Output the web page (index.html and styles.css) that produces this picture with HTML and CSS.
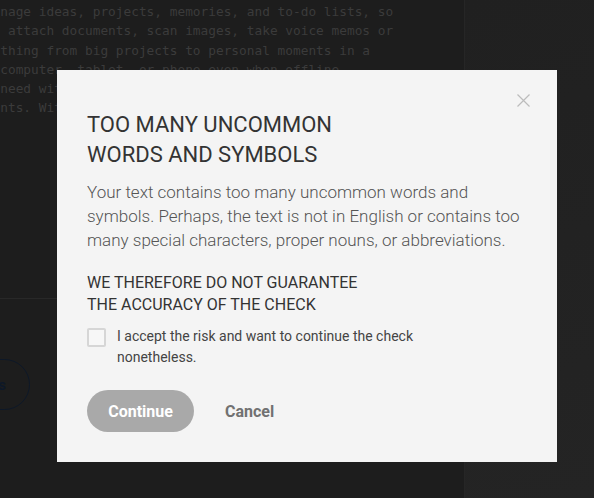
FILE: index.html
```
<!DOCTYPE html>
<html lang="en">
<head>
  <meta charset="UTF-8" />
  <title>Check</title>
  <link rel="stylesheet" href="styles.css">
</head>
<body>
<div class="editor">
  <div class="doc">
    <div class="doc-text">
      <div class="doc-line">    manage ideas, projects, memories, and to-do lists, so</div>
      <div class="doc-line">If you attach documents, scan images, take voice memos or</div>
      <div class="doc-line"> everything from big projects to personal moments in a</div>
      <div class="doc-line"> your computer, tablet, or phone—even when offline.</div>
      <div class="doc-line">  you need with the tools you already use every day</div>
      <div class="doc-line">  moments. With everything in one place, nothing</div>
    </div>
    <div class="doc-rule"></div>
    <div class="doc-actions">
      <button class="pill-btn">Check texts</button>
    </div>
  </div>
  <div class="side"></div>
</div>

<div class="overlay">
  <div class="dialog">
    <button class="close-btn" aria-label="Close">
      <svg width="13" height="13" viewBox="0 0 13 13">
        <path d="M0.5 0.5 L12.5 12.5 M12.5 0.5 L0.5 12.5" stroke="#bcbcbc" stroke-width="1.2" fill="none"/>
      </svg>
    </button>
    <h2 class="dialog-title">TOO MANY UNCOMMON<br>WORDS AND SYMBOLS</h2>
    <p class="dialog-text">Your text contains too many uncommon words and symbols. Perhaps, the text is not in English or contains too many special characters, proper nouns, or abbreviations.</p>
    <h3 class="dialog-sub">WE THEREFORE DO NOT GUARANTEE<br>THE ACCURACY OF THE CHECK</h3>
    <label class="accept">
      <span class="box"></span>
      <span class="accept-text">I accept the risk and want to continue the check nonetheless.</span>
    </label>
    <div class="dialog-actions">
      <button class="continue-btn">Continue</button>
      <button class="cancel-btn">Cancel</button>
    </div>
  </div>
</div>
</body>
</html>
```

FILE: styles.css
```
body {
  margin: 0;
  background: #212121;
  font-family: Roboto, "Liberation Sans", sans-serif;
  overflow: hidden;
}
.editor {
  display: flex;
  height: 100vh;
}
.doc {
  width: 464px;
  flex-shrink: 0;
  background: #1d1d1d;
  border-right: 1px solid #262626;
  overflow: hidden;
}
.doc-text {
  margin-left: -46px;
  padding-top: 2px;
  font-family: "DejaVu Sans Mono", monospace;
  font-size: 12.8px;
  line-height: 19.3px;
  color: #3b3b3b;
  height: 296px;
}
.doc-line {
  white-space: pre;
}
.doc-rule {
  border-top: 1px solid #282828;
}
.doc-actions {
  padding-top: 60px;
}
.pill-btn {
  margin-left: -112px;
  width: 142px;
  height: 51px;
  border: 1.5px solid #0d1828;
  border-radius: 26px;
  background: transparent;
  color: #0d1828;
  font-family: Roboto, sans-serif;
  font-size: 15px;
  font-weight: bold;
  text-align: right;
  padding-right: 23px;
}
.side {
  flex: 1;
  background: linear-gradient(160deg, #202020, #242424);
}

.overlay {
  position: fixed;
  inset: 0;
  display: flex;
  align-items: flex-start;
  padding: 70px 0 0 57px;
}
.dialog {
  position: relative;
  width: 500px;
  box-sizing: border-box;
  padding: 40px 30px 30px;
  background: #f4f4f4;
}
.close-btn {
  position: absolute;
  top: 24px;
  right: 27px;
  padding: 0;
  border: none;
  background: none;
  line-height: 0;
  cursor: pointer;
}
.dialog-title {
  margin: 0;
  font-size: 22px;
  font-weight: normal;
  line-height: 30px;
  color: #333;
}
.dialog-text {
  margin: 10px 0 0;
  font-size: 17px;
  font-weight: 300;
  line-height: 24px;
  color: #555;
}
.dialog-sub {
  margin: 20px 0 0;
  font-size: 16px;
  font-weight: normal;
  line-height: 22px;
  color: #333;
}
.accept {
  display: flex;
  gap: 11px;
  margin-top: 10px;
  cursor: pointer;
}
.box {
  width: 19px;
  height: 19px;
  margin-top: 2px;
  flex-shrink: 0;
  box-sizing: border-box;
  border: 2px solid #d6d6d6;
  border-radius: 2px;
  background: #f7f7f7;
}
.accept-text {
  max-width: 310px;
  font-size: 14px;
  line-height: 21px;
  color: #444;
}
.dialog-actions {
  display: flex;
  align-items: center;
  gap: 31px;
  margin-top: 22px;
}
.continue-btn {
  width: 107px;
  height: 42px;
  border: none;
  border-radius: 21px;
  background: #a9a9a9;
  color: #fff;
  font-family: Roboto, sans-serif;
  font-size: 16px;
  font-weight: bold;
}
.cancel-btn {
  padding: 0;
  border: none;
  background: none;
  color: #717171;
  font-family: Roboto, sans-serif;
  font-size: 16px;
  font-weight: bold;
}
```
